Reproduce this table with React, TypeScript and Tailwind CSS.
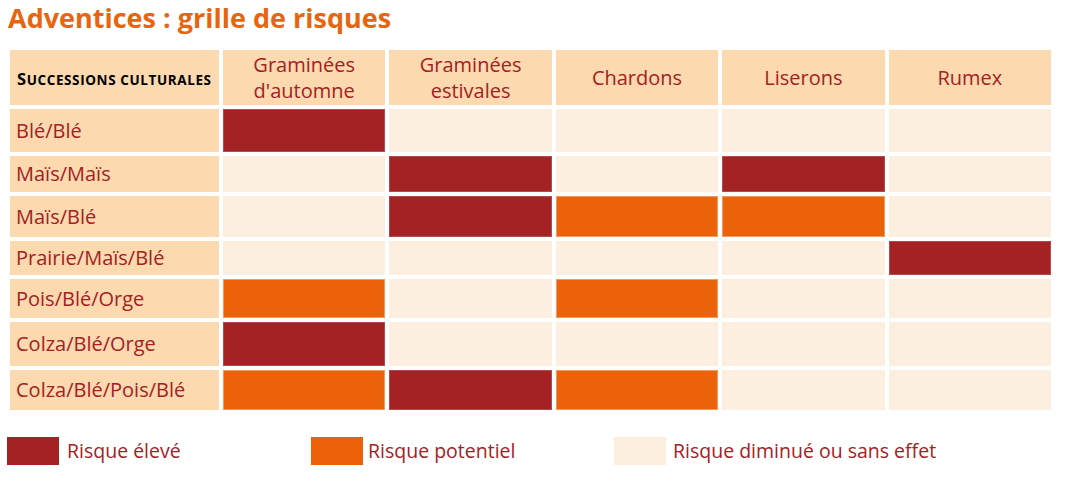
const cols = ["Graminées d'automne", "Graminées estivales", "Chardons", "Liserons", "Rumex"];

// e = élevé, p = potentiel, d = diminué
const rows: { name: string; h: string; risks: string[] }[] = [
  { name: "Blé/Blé", h: "h-[43px]", risks: ["e", "d", "d", "d", "d"] },
  { name: "Maïs/Maïs", h: "h-[36px]", risks: ["d", "e", "d", "e", "d"] },
  { name: "Maïs/Blé", h: "h-[41px]", risks: ["d", "e", "p", "p", "d"] },
  { name: "Prairie/Maïs/Blé", h: "h-[34px]", risks: ["d", "d", "d", "d", "e"] },
  { name: "Pois/Blé/Orge", h: "h-[39px]", risks: ["p", "d", "p", "d", "d"] },
  { name: "Colza/Blé/Orge", h: "h-[44px]", risks: ["e", "d", "d", "d", "d"] },
  { name: "Colza/Blé/Pois/Blé", h: "h-[40px]", risks: ["p", "e", "p", "d", "d"] },
];

const riskClass: Record<string, string> = {
  e: "bg-[#a42124] border border-[#b54a4d]",
  p: "bg-[#ec620b] border border-[#f29a5e]",
  d: "bg-[#fdefdf]",
};

export default function App() {
  return (
    <div className="h-[480px] w-[1065px] bg-white font-['Open_Sans',sans-serif] text-[#a42124]">
      <h1 className="pl-[8px] pt-[1px] text-[27px] font-bold leading-[34px] text-[#e8650f]">
        Adventices : grille de risques
      </h1>

      <div className="ml-[10px] mt-[15px] grid w-[1041px] grid-cols-[209px_repeat(5,1fr)] gap-[4px]">
        <div className="flex h-[55px] items-baseline whitespace-nowrap bg-[#fcd9ae] pl-[7px] pt-[17px] font-bold uppercase tracking-[0.6px] text-black">
          <span className="text-[16.5px]">S</span>
          <span className="text-[13.5px]">uccessions culturales</span>
        </div>
        {cols.map((c) => (
          <div
            key={c}
            className="flex h-[55px] items-center justify-center bg-[#fcd9ae] px-6 text-center text-[20px] leading-[26px]"
          >
            {c}
          </div>
        ))}

        {rows.map((r) => (
          <Row key={r.name} row={r} />
        ))}
      </div>

      <div className="mt-[26px] flex items-center text-[19.5px]">
        <Legend box="bg-[#a42124]" label="Risque élevé" className="ml-[7px] w-[304px]" />
        <Legend box="bg-[#ec620b]" label="Risque potentiel" className="w-[303px]" gap="gap-[5px]" />
        <Legend box="bg-[#fdefdf]" label="Risque diminué ou sans effet" gap="gap-[7px]" />
      </div>
    </div>
  );
}

function Row({ row }: { row: { name: string; h: string; risks: string[] } }) {
  return (
    <>
      <div className={`flex items-center bg-[#fcd9ae] pl-[6px] text-[20px] ${row.h}`}>{row.name}</div>
      {row.risks.map((k, i) => (
        <div key={i} className={`${row.h} ${riskClass[k]}`} />
      ))}
    </>
  );
}

function Legend({
  box,
  label,
  className = "",
  gap = "gap-[8px]",
}: {
  box: string;
  label: string;
  className?: string;
  gap?: string;
}) {
  return (
    <div className={`flex items-center ${gap} ${className}`}>
      <div className={`h-[28px] w-[52px] ${box}`} />
      <span>{label}</span>
    </div>
  );
}
